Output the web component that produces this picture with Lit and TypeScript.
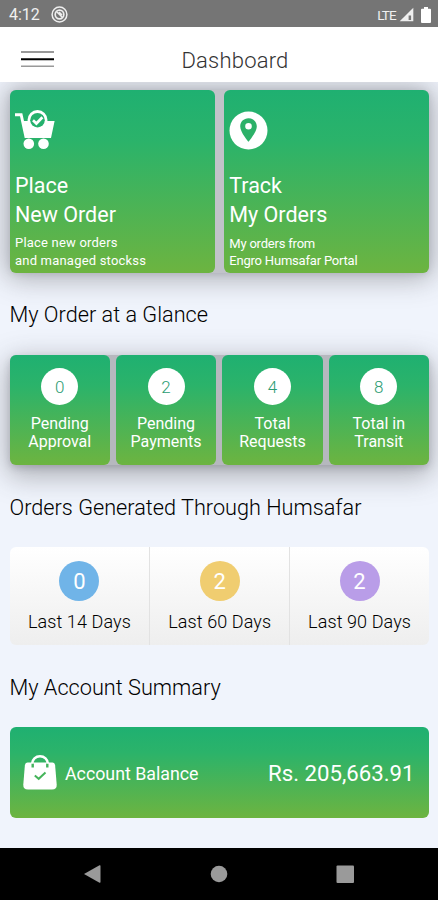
import { LitElement, html, css } from "lit";
import { customElement } from "lit/decorators.js";

const cartIcon = html`<svg class="cart" width="41" height="40" viewBox="0 0 41 40">
  <path d="M0 3.200h7.300L9 11h4.300a10 10 0 0 1 18.800 0H39.600L36 28H9.700L5 6.200H0z" fill="#fff"/>
  <circle cx="22.500" cy="10" r="10" fill="#fff"/>
  <circle cx="22.500" cy="10.200" r="7.300" fill="#25b16d"/>
  <path d="M18 10.300l3.400 3.200 6-6.200" fill="none" stroke="#fff" stroke-width="2.700"/>
  <circle cx="13.800" cy="33.800" r="5.300" fill="#fff"/><circle cx="28.500" cy="33.800" r="5.300" fill="#fff"/>
</svg>`;

const pinIcon = html`<svg width="39" height="39" viewBox="0 0 39 39">
  <circle cx="19.500" cy="19.500" r="19" fill="#fff"/>
  <path fill-rule="evenodd" fill="#2cb168" d="M19.500 7.200c-4.800 0-8.300 3.600-8.300 8.200 0 5.800 8.300 15.400 8.300 15.400s8.300-9.600 8.300-15.400c0-4.600-3.500-8.200-8.300-8.200zm0 4.800a3.300 3.300 0 1 1 0 6.600 3.300 3.300 0 0 1 0-6.600z"/>
</svg>`;

const bagIcon = html`<svg width="34" height="35" viewBox="0 0 34 35">
  <path d="M4.500 7.500h25q2.300 0 2.600 2.500L33.700 29.500q.3 5-4.700 5H5Q0 34.500.300 29.500L1.900 10Q2.200 7.500 4.500 7.500z" fill="#fff"/>
  <path d="M9.700 12.500V8.500M24.300 12.500V8.500" stroke="#42b35d" stroke-width="2.400"/>
  <path d="M9.200 8.500a7.800 7.200 0 0 1 15.600 0" fill="none" stroke="#fff" stroke-width="2.600"/>
  <path d="M11.800 20.500l3.900 3.300 6.800-6.200" fill="none" stroke="#45b45a" stroke-width="2"/>
</svg>`;

@customElement("app-root")
export class AppRoot extends LitElement {
  static styles = css`
    :host { display: flex; flex-direction: column; width: 438px; height: 900px; overflow: hidden;
      font-family: Roboto, sans-serif; background: #f0f4fc; }
    * { box-sizing: border-box; }
    svg { display: block; flex: none; }
    .status { height: 27px; flex: none; background: #757575; color: #f0f0f0; display: flex; align-items: center;
      padding: 2px 7px 0 9px; font-size: 16px; }
    .status .ring { margin-left: 11px; }
    .status .lte { margin-left: auto; font-size: 13.500px; letter-spacing: -0.800px; }
    .status .signal { margin-left: 3px; }
    .status .battery { margin-left: 7px; }
    header { height: 55px; flex: none; background: #fff; display: grid; grid-template-columns: 64px 1fr 64px;
      align-items: center; padding-top: 10px; }
    .menu { margin-left: 21px; margin-top: -2px; }
    h1 { margin: 0; text-align: center; font-weight: 300; font-size: 22px; line-height: 28px; color: #333;
      letter-spacing: 0.200px; padding-left: 32px; padding-top: 2px; }
    main { flex: 1; min-height: 0; padding: 8px 9px 0 9.500px; overflow: hidden; }
    .green { background: linear-gradient(#1fb071 0%, #2bb36a 28%, #6db440 100%); color: #fff; border-radius: 6px; }
    .heroes { display: grid; grid-template-columns: 1fr 1fr; gap: 9px; height: 182.500px; border-radius: 6px;
      box-shadow: 0 1px 28px 4px rgba(60,60,66,.4), 0 1px 6px rgba(60,60,70,.12); background: #c1c3c9; }
    .hero { padding: 20px 5.500px 0; }
    .hero .art { height: 60.500px; }
    .hero.second .art { padding-top: 1px; height: 61px; }
    .hero .title { font-size: 21.500px; line-height: 29px; }
    .hero .sub { font-size: 13px; line-height: 18px; margin-top: 5.500px; white-space: nowrap; letter-spacing: .2px; }
    .hero.second .sub { margin-top: 5.500px; line-height: 17px; letter-spacing: -.2px; }
    h2 { margin: 0; font-size: 21.700px; font-weight: 300; line-height: 30px; color: #000; white-space: nowrap; }
    .h-a { margin-top: 27px; } .h-b { margin-top: 28px; } .h-c { margin-top: 28px; }
    .stats { display: grid; grid-template-columns: repeat(4, 1fr); gap: 6px; height: 110px; margin-top: 25px;
      border-radius: 6px; box-shadow: 0 8px 28px 3px rgba(60,60,66,.38), 0 3px 7px rgba(60,60,70,.2); background: #b6b8be; }
    .stat { display: flex; flex-direction: column; align-items: center; padding-top: 13px; font-size: 16px;
      line-height: 18.500px; text-align: center; }
    .dot { width: 37px; height: 37px; border-radius: 50%; background: #fff; color: #2a9c72; font-weight: 300;
      display: grid; place-items: center; font-size: 17px; margin-bottom: 10px; padding-top: 2px; }
    .periods { display: grid; grid-template-columns: repeat(3, 1fr); height: 98px; margin-top: 24px;
      border-radius: 6px; background: linear-gradient(#fff, #eee); }
    .period { display: flex; flex-direction: column; align-items: center; padding-top: 14px; color: #000;
      font-size: 18px; font-weight: 300; letter-spacing: .1px; }
    .period + .period { border-left: 1px solid #e2e2e2; }
    .disc { width: 40px; height: 40px; border-radius: 50%; display: grid; place-items: center; color: #fff;
      font-size: 22px; font-weight: 400; margin-bottom: 10px; padding-top: 2px; }
    .blue { background: #70b4e8; } .gold { background: #f0cd70; } .violet { background: #b99de8; }
    .balance { display: flex; align-items: center; height: 91px; margin-top: 24px; padding: 2px 14.500px 0 13.500px; }
    .balance svg { margin-top: -2px; }
    .balance .label { margin-left: 8px; font-size: 17.800px; }
    .balance .amount { margin-left: auto; font-size: 22.200px; }
    nav { height: 52px; flex: none; background: #000; display: flex; justify-content: center; align-items: center; }
  `;

  private stats = [["0", "Pending", "Approval"], ["2", "Pending", "Payments"], ["4", "Total", "Requests"], ["8", "Total in", "Transit"]];
  private periods = [["0", "Last 14 Days", "blue"], ["2", "Last 60 Days", "gold"], ["2", "Last 90 Days", "violet"]];

  render() {
    return html`
      <div class="status">
        <span class="clock">4:12</span>
        <svg class="ring" width="17" height="17" viewBox="0 0 17 17" fill="none" stroke="#eee">
          <circle cx="8.500" cy="8.500" r="7.400" stroke-width="1.500"/><circle cx="8.500" cy="8.500" r="4.300" stroke-width="1.700"/>
          <path d="M5.500 5.500l6 6M8 6l3 3" stroke-width="1.500"/>
        </svg>
        <span class="lte">LTE</span>
        <svg class="signal" width="15" height="15" viewBox="0 0 15 15">
          <path d="M14.300.700v13.600H.700z" fill="#eee"/><path d="M9.600 8.500h2.500v4.500H9.600z" fill="#777"/>
        </svg>
        <svg class="battery" width="10" height="16" viewBox="0 0 10 16"><path d="M3 0h4v1.800h2q1 0 1 1V15q0 1-1 1H1q-1 0-1-1V2.800q0-1 1-1h2z" fill="#fff"/></svg>
      </div>
      <header>
        <svg class="menu" width="33" height="18" viewBox="0 0 33 18">
          <path d="M0 2h33" stroke="#777" stroke-width="1.500"/><path d="M0 9.300h33" stroke="#000" stroke-width="2"/><path d="M0 16.300h33" stroke="#999" stroke-width="1.500"/>
        </svg>
        <h1>Dashboard</h1>
      </header>
      <main>
        <section class="heroes">
          <div class="hero green"><div class="art">${cartIcon}</div>
            <div class="title">Place<br>New Order</div><div class="sub">Place new orders<br>and managed stockss</div></div>
          <div class="hero second green"><div class="art">${pinIcon}</div>
            <div class="title">Track<br>My Orders</div><div class="sub">My orders from<br>Engro Humsafar Portal</div></div>
        </section>
        <h2 class="h-a">My Order at a Glance</h2>
        <section class="stats">
          ${this.stats.map(([n, a, b]) => html`<div class="stat green"><div class="dot">${n}</div><span>${a}</span><span>${b}</span></div>`)}
        </section>
        <h2 class="h-b">Orders Generated Through Humsafar</h2>
        <section class="periods">
          ${this.periods.map(([n, label, tone]) => html`<div class="period"><div class="disc ${tone}">${n}</div><span>${label}</span></div>`)}
        </section>
        <h2 class="h-c">My Account Summary</h2>
        <section class="balance green">${bagIcon}<span class="label">Account Balance</span><span class="amount">Rs. 205,663.91</span></section>
      </main>
      <nav>
        <svg width="438" height="52" viewBox="0 0 438 52" fill="#9a9a9a">
          <path d="M84 26L99.500 17.300q1 -.3 1 .7v16q0 1-1 .7z"/><circle cx="219" cy="26" r="8.300"/><rect x="336.500" y="17.500" width="17.500" height="17.500" rx="1"/>
        </svg>
      </nav>`;
  }
}
